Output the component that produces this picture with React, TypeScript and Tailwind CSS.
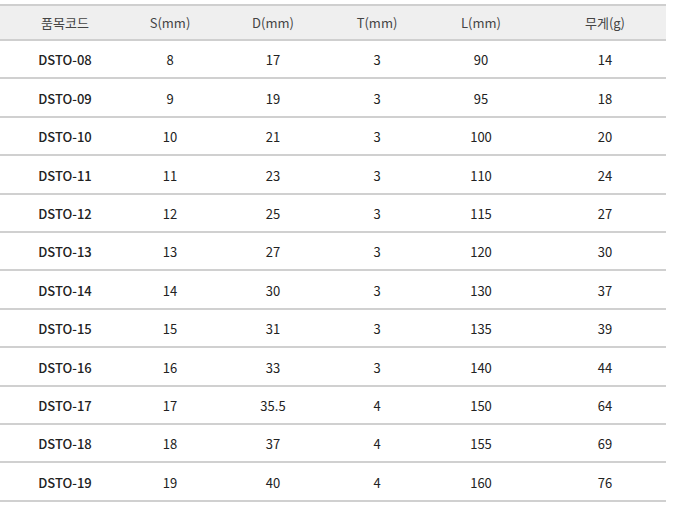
const rows = [
  ["DSTO-08", "8", "17", "3", "90", "14"],
  ["DSTO-09", "9", "19", "3", "95", "18"],
  ["DSTO-10", "10", "21", "3", "100", "20"],
  ["DSTO-11", "11", "23", "3", "110", "24"],
  ["DSTO-12", "12", "25", "3", "115", "27"],
  ["DSTO-13", "13", "27", "3", "120", "30"],
  ["DSTO-14", "14", "30", "3", "130", "37"],
  ["DSTO-15", "15", "31", "3", "135", "39"],
  ["DSTO-16", "16", "33", "3", "140", "44"],
  ["DSTO-17", "17", "35.5", "4", "150", "64"],
  ["DSTO-18", "18", "37", "4", "155", "69"],
  ["DSTO-19", "19", "40", "4", "160", "76"],
]

const headers = ["품목코드", "S(mm)", "D(mm)", "T(mm)", "L(mm)", "무게(g)"]

const cols = "grid grid-cols-[130px_80px_126px_82px_126px_122px]"

export default function App() {
  return (
    <div
      className="w-[684px] h-[523px] bg-white pt-[4px]"
      style={{ fontFamily: '"Noto Sans CJK KR", "Noto Sans", sans-serif' }}
    >
      <div className="w-[666px]">
        <div className={`${cols} h-[37px] items-center bg-[#efefef] border-t-2 border-b-2 border-[#cfcfcf] text-[13px] text-[#444]`}>
          {headers.map((h) => (
            <div key={h} className="text-center">{h}</div>
          ))}
        </div>
        {rows.map((r) => (
          <div
            key={r[0]}
            className={`${cols} h-[38.4px] items-center pt-[2px] border-b-2 border-[#d0d0d0] text-[13px] text-[#222]`}
          >
            {r.map((c, i) => (
              <div key={i} className={i === 0 ? "text-center font-medium" : "text-center"}>
                {c}
              </div>
            ))}
          </div>
        ))}
      </div>
    </div>
  )
}
